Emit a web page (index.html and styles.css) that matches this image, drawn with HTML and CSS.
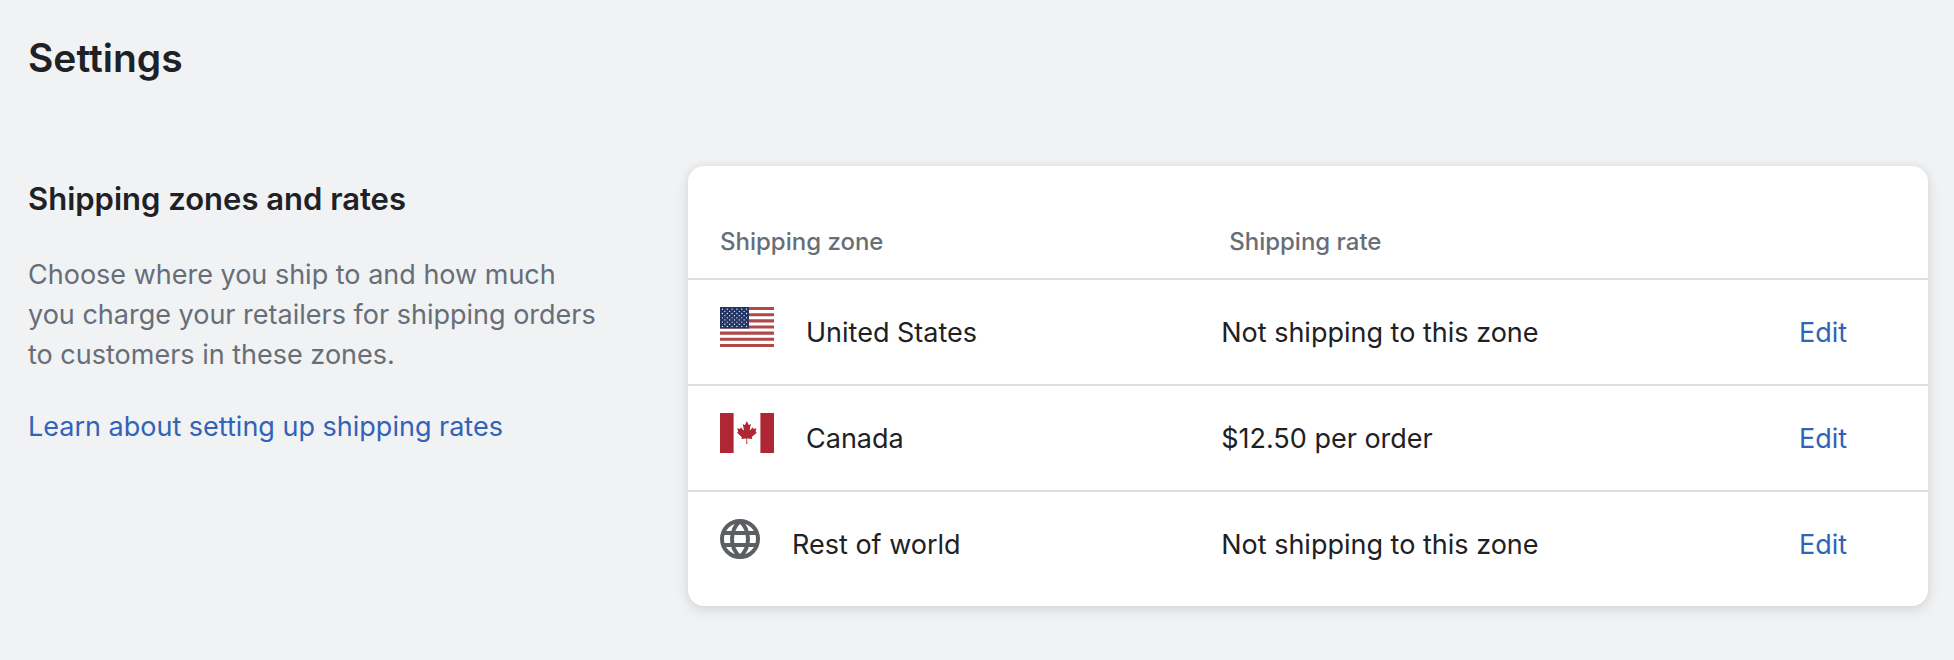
FILE: index.html
```html
<!DOCTYPE html>
<html lang="en">
<head>
    <meta charset="UTF-8">
    <meta name="viewport" content="width=device-width, initial-scale=1.0">
    <title>Settings</title>
    <link rel="stylesheet" href="styles.css">
</head>
<body>
    <main class="page">
        <h1 class="page-title">Settings</h1>

        <section class="layout">
            <div class="annotation">
                <h2>Shipping zones and rates</h2>
                <p>Choose where you ship to and how much you charge your retailers for shipping orders to customers in these zones.</p>
                <p><a href="#">Learn about setting up shipping rates</a></p>
            </div>

            <div class="card">
                <table class="zones">
                    <thead>
                        <tr>
                            <th class="col-zone" scope="col">Shipping zone</th>
                            <th class="col-rate" scope="col">Shipping rate</th>
                            <td class="col-action"></td>
                        </tr>
                    </thead>
                    <tbody>
                        <tr>
                            <td class="col-zone">
                                <div class="zone">
                                    <svg class="flag" viewBox="0 0 54 40" aria-hidden="true">
                                        <rect width="54" height="40" fill="#fff"/>
                                        <path d="M0 1.54h54M0 7.69h54M0 13.85h54M0 20h54M0 26.15h54M0 32.31h54M0 38.46h54" stroke="#b04849" stroke-width="3.08"/>
                                        <rect width="29" height="21.54" fill="#243564"/>
                                        <!-- stars: rows of six, then rows of five -->
                                        <g fill="none" stroke="#fff" stroke-width="1.3" stroke-linecap="round" stroke-dasharray="0 4.8">
                                            <path d="M2.5 2.2h24.1M2.5 6.5h24.1M2.5 10.8h24.1M2.5 15.1h24.1M2.5 19.4h24.1"/>
                                            <path d="M4.9 4.35h19.3M4.9 8.65h19.3M4.9 12.95h19.3M4.9 17.25h19.3"/>
                                        </g>
                                    </svg>
                                    <span>United States</span>
                                </div>
                            </td>
                            <td class="col-rate">Not shipping to this zone</td>
                            <td class="col-action"><a href="#">Edit</a></td>
                        </tr>
                        <tr>
                            <td class="col-zone">
                                <div class="zone">
                                    <svg class="flag" viewBox="0 0 54 40" aria-hidden="true">
                                        <rect width="54" height="40" fill="#fff"/>
                                        <path d="M0 0h13.6v40H0zM40.4 0H54v40H40.4z" fill="#af2634"/>
                                        <path transform="translate(2.2 .1) scale(.078 .0825)" fill="#af2634" d="M201 232l-13.3 4.4 61.4 54c4.7 13.7-1.6 17.8-5.6 25l66.6-8.4-1.6 67 13.9-.3-3.1-66.6 66.7 8c-4.1-8.7-7.8-13.3-4-27.2l61.3-51-10.7-4c-8.8-6.8 3.8-32.6 5.6-48.9 0 0-35.7 12.3-38 5.8l-9.2-17.5-32.6 35.8c-3.5.9-5-.5-5.9-3.5l15-74.8-23.8 13.4q-3.2 1.3-5.2-2.2l-23-46-23.6 47.8q-2.8 2.5-5 .7L264 130.8l13.7 74.1c-1.1 3-3.7 3.8-6.7 2.2l-31.2-35.3c-4 6.5-6.8 17.1-12.2 19.5s-23.5-4.5-35.6-7c4.2 14.8 17 39.6 9 47.7z"/>
                                    </svg>
                                    <span>Canada</span>
                                </div>
                            </td>
                            <td class="col-rate">$12.50 per order</td>
                            <td class="col-action"><a href="#">Edit</a></td>
                        </tr>
                        <tr>
                            <td class="col-zone">
                                <div class="zone">
                                    <svg class="globe" viewBox="0 0 40 40" aria-hidden="true">
                                        <g fill="none" stroke="#5c5f62" stroke-width="4">
                                            <circle cx="20" cy="20" r="18"/>
                                            <path d="M3 14h34M3 26h34"/>
                                            <path d="M20 2a24.25 24.25 0 0 0 0 36M20 2a24.25 24.25 0 0 1 0 36"/>
                                        </g>
                                    </svg>
                                    <span>Rest of world</span>
                                </div>
                            </td>
                            <td class="col-rate">Not shipping to this zone</td>
                            <td class="col-action"><a href="#">Edit</a></td>
                        </tr>
                    </tbody>
                </table>
            </div>
        </section>
    </main>
</body>
</html>
```
FILE: styles.css
```css
* { box-sizing: border-box; margin: 0; padding: 0; }

body {
    font-family: Inter, "Liberation Sans", sans-serif;
    font-size: 27px;
    line-height: 40px;
    color: #202124;
    background: #f0f2f4;
}

a {
    color: #3163b7;
    text-decoration: none;
}

a:hover { text-decoration: underline; }

.page { padding: 34px 26px 34px 28px; }

.page-title {
    margin-bottom: 84px;
    font-size: 39px;
    font-weight: 600;
    line-height: 48px;
}

.layout {
    display: grid;
    grid-template-columns: 1fr 2fr;
    gap: 40px;
    align-items: start;
}

.annotation {
    padding: 13px 40px 0 0;
    color: #676e78;
}

.annotation h2 {
    margin-bottom: 36px;
    font-size: 31px;
    font-weight: 600;
    color: #202124;
}

.annotation p + p { margin-top: 32px; }

.card {
    padding: 40px 0 10px;
    background: #fff;
    border-radius: 16px;
    box-shadow: 0 0 10px rgba(23, 24, 24, 0.05), 0 4px 14px rgba(0, 0, 0, 0.1);
}

.zones {
    width: 100%;
    table-layout: fixed;
    border-spacing: 0;
    text-align: left;
}

.zones th {
    padding: 20px 0;
    font-size: 24px;
    font-weight: 500;
    line-height: 32px;
    color: #676e78;
}

.zones .col-zone {
    width: 43%;
    padding-left: 32px;
}

.zones th.col-rate { padding-left: 8px; }

.zones .col-action { width: 129px; }

.zones tbody td {
    padding-top: 27px;
    padding-bottom: 25px;
    border-top: 2px solid #dfdfe4;
}

.zone {
    display: flex;
    align-items: center;
    gap: 32px;
}

.flag, .globe {
    flex: none;
    height: 40px;
    margin-bottom: 12px;
}

.flag { width: 54px; }
.globe { width: 40px; }
```
